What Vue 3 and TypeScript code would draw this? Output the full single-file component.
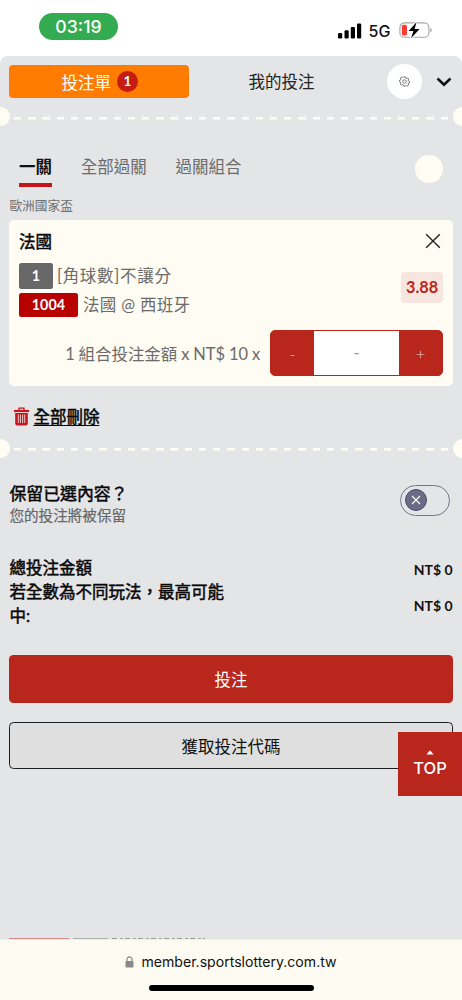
<script setup lang="ts">
import { ref } from 'vue'

const tabs = ['一關', '全部過關', '過關組合']
const activeTab = ref(0)
const keepSelection = ref(false)
</script>

<template>
  <div class="phone">
    <header class="status">
      <span class="clock">03:19</span>
      <div class="status-right">
        <svg class="signal" viewBox="0 0 24 16" width="24" height="16">
          <rect x="0" y="10" width="4.2" height="5.5" rx="1.2" />
          <rect x="6.5" y="7.2" width="4.2" height="8.3" rx="1.2" />
          <rect x="12.8" y="4" width="4.2" height="11.5" rx="1.2" />
          <rect x="19" y="0.6" width="4.2" height="14.9" rx="1.2" />
        </svg>
        <span class="network">5G</span>
        <svg class="battery" viewBox="0 0 34 18" width="34" height="18">
          <rect x="0.9" y="1.9" width="29" height="14.4" rx="4.6" fill="#fff" stroke="#a5a5a5" stroke-width="1.1" />
          <path d="M31.3 6.7v4.8c1.9-.8 1.9-4 0-4.8z" fill="#a5a5a5" />
          <rect x="2.8" y="3.8" width="5.2" height="10.8" rx="1.8" fill="#ff3b30" />
          <path d="M17.6 1 9.6 10h4.9l-2.5 7.3L20.6 8h-5z" fill="#000" stroke="#fff" stroke-width="2" paint-order="stroke" />
        </svg>
      </div>
    </header>

    <main class="sheet">
      <div class="top-row">
        <button class="slip-tab">投注單<span class="count">1</span></button>
        <button class="mine-tab">我的投注</button>
        <button class="gear" aria-label="settings">
          <svg viewBox="0 0 24 24" width="11" height="11" fill="none" stroke="#444" stroke-width="1.5" stroke-linejoin="round">
            <path d="M10 2h4l.7 2.7 1.6.7 2.5-1.4 2.4 2.6-1.3 2.4.6 1.6 2.5.9v3.4l-2.6.7-.7 1.7 1.3 2.4-2.6 2.4-2.3-1.3-1.7.6L14 22h-4l-.8-2.7-1.7-.6-2.4 1.3-2.3-2.5 1.3-2.3-.7-1.7-2.4-.8v-3.3l2.6-.8.6-1.6-1.3-2.3 2.4-2.6 2.4 1.3 1.6-.7z" />
            <circle cx="12" cy="12" r="3.8" />
          </svg>
        </button>
        <svg class="chevron" viewBox="0 0 16 10" width="16" height="10" fill="none" stroke="#111" stroke-width="2.5">
          <path d="M1.5 1.5 8 7.7l6.5-6.2" />
        </svg>
      </div>

      <div class="divider"></div>

      <nav class="tabs">
        <button v-for="(t, i) in tabs" :key="t" :class="['tab', { active: i === activeTab }]" @click="activeTab = i">{{ t }}</button>
        <span class="dot"></span>
      </nav>

      <p class="league">歐洲國家盃</p>

      <section class="card">
        <div class="card-head">
          <h3 class="medium">法國</h3>
          <svg class="close" viewBox="0 0 16 16" width="16" height="16" stroke="#222" stroke-width="1.4">
            <path d="M1.2 1.2 14.8 14.8M14.8 1.2 1.2 14.8" />
          </svg>
        </div>
        <div class="card-body">
          <div class="picks">
            <div class="pick first"><span class="tag gray">1</span>[角球數]不讓分</div>
            <div class="pick"><span class="tag red">1004</span>法國 @ 西班牙</div>
          </div>
          <span class="odds">3.88</span>
        </div>
        <div class="stake">
          <span class="formula">1 組合投注金額 x NT$ 10 x</span>
          <div class="stepper">
            <button>-</button>
            <span class="amount">-</span>
            <button>+</button>
          </div>
        </div>
      </section>

      <div class="delete">
        <svg viewBox="0 0 15 19" width="15" height="19" fill="none" stroke="#c4161c">
          <path d="M5 3V1.2h5V3" stroke-width="1.3" />
          <path d="M0 4h15" stroke-width="2.2" />
          <path d="M1.2 6h12.6v10.5q0 2-2 2h-8.6q-2 0-2-2z" fill="#c4161c" stroke="none" />
          <path d="M4.3 7.5v8.5M6.4 7.5v8.5M8.6 7.5v8.5M10.7 7.5v8.5" stroke="#f3dcdc" stroke-width="0.9" />
        </svg>
        <a class="medium">全部刪除</a>
      </div>

      <div class="divider"></div>

      <div class="keep">
        <div>
          <p class="keep-title medium">保留已選內容？</p>
          <p class="keep-sub">您的投注將被保留</p>
        </div>
        <button class="toggle" aria-label="keep" @click="keepSelection = !keepSelection">
          <span class="knob">
            <svg viewBox="0 0 10 10" width="10" height="10" stroke="#fff" stroke-width="1.1"><path d="M1 1l8 8M9 1l-8 8" /></svg>
          </span>
        </button>
      </div>

      <div class="totals">
        <div class="total-row"><span class="medium">總投注金額</span><b>NT$ 0</b></div>
        <div class="total-row"><span class="wrap medium">若全數為不同玩法，最高可能中:</span><b>NT$ 0</b></div>
      </div>

      <button class="submit">投注</button>
      <button class="code">獲取投注代碼</button>

      <button class="to-top">
        <svg viewBox="0 0 8 5" width="8" height="5"><path d="M.5 4.5 3.3 1q.7-.8 1.4 0l2.8 3.5z" fill="#fff" /></svg>
        <span>TOP</span>
      </button>

      <div class="peek">
        <span class="peek-red"></span>
        <span class="peek-gray"></span>
        <span class="peek-text"></span>
      </div>
    </main>

    <footer class="browser">
      <div class="address">
        <svg viewBox="0 0 9 12" width="9" height="12">
          <path d="M2 6V3.6a2.5 2.8 0 0 1 5 0V6" fill="none" stroke="#8a8a88" stroke-width="1.2" />
          <rect x="0.5" y="5" width="8" height="6.6" rx="1.2" fill="#8a8a88" />
        </svg>
        <span>member.sportslottery.com.tw</span>
      </div>
      <div class="home"></div>
    </footer>
  </div>
</template>

<style>
body {
  background: #fff;
}
</style>

<style scoped>
.phone {
  width: 462px;
  height: 1000px;
  display: flex;
  flex-direction: column;
  overflow: hidden;
  background: #fff;
  font-family: Lato, 'Noto Sans CJK TC', sans-serif;
  font-size: 16.5px;
  color: #111;
}
.phone * {
  box-sizing: border-box;
}
button {
  border: 0;
  padding: 0;
  margin: 0;
  background: none;
  font: inherit;
  color: inherit;
}
p,
h3 {
  margin: 0;
}
svg {
  display: block;
  flex: none;
}
.medium {
  font-weight: 400;
  color: #080808;
  -webkit-text-stroke: 0.5px #080808;
}
.status {
  height: 56px;
  flex: none;
  display: flex;
  justify-content: space-between;
  padding: 13px 31px 0 39px;
  font-family: Inter, sans-serif;
}
.clock {
  width: 79px;
  height: 27px;
  border-radius: 14px;
  background: #33ab50;
  color: #fff;
  font-size: 17.7px;
  font-weight: 500;
  line-height: 27px;
  text-align: center;
}
.status-right {
  display: flex;
  align-items: flex-start;
}
.signal {
  margin-top: 9.5px;
}
.network {
  margin: 8px 7px 0 6.5px;
  width: 23px;
  font-size: 16px;
  font-weight: 500;
  line-height: 20px;
}
.battery {
  margin-top: 8px;
  margin-right: -1.5px;
}
.sheet {
  flex: 1;
  min-height: 0;
  position: relative;
  display: flex;
  flex-direction: column;
  background: #e4e5e7;
  border-radius: 8px 8px 0 0;
  padding: 7px 9.4px 0;
  overflow: hidden;
}
.top-row {
  height: 37px;
  flex: none;
  display: flex;
  align-items: center;
}
.slip-tab {
  width: 179.5px;
  height: 33.5px;
  display: flex;
  align-items: center;
  justify-content: center;
  gap: 6px;
  padding-left: 1px;
  border-radius: 4px;
  background: #ff7c00;
  color: #fff;
}
.count {
  width: 21px;
  height: 21px;
  border-radius: 50%;
  background: #c61c12;
  font-size: 13.5px;
  font-weight: 700;
  line-height: 21px;
}
.mine-tab {
  width: 185px;
  line-height: 22px;
  color: #222;
}
.gear {
  width: 35.5px;
  height: 35.5px;
  margin-left: 13px;
  border-radius: 50%;
  background: #fff;
  display: grid;
  place-items: center;
}
.chevron {
  margin-left: 13.5px;
}
.divider {
  position: relative;
  flex: none;
  height: 19px;
  margin: 7px -9.4px 0;
  background: repeating-linear-gradient(90deg, #fffdf3 0 7.3px, transparent 7.3px 14.22px) 14px 9.7px / 434px 2.6px no-repeat;
}
.divider::before,
.divider::after {
  content: '';
  position: absolute;
  top: 0;
  width: 19px;
  height: 19px;
  border-radius: 50%;
  background: #fffdf3;
}
.divider::before {
  left: -9.5px;
}
.divider::after {
  right: -9.5px;
}
.tabs {
  flex: none;
  height: 42px;
  margin-top: 20px;
  padding: 0 9.5px;
  display: flex;
  align-items: flex-start;
  gap: 28.8px;
}
.tab {
  height: 41px;
  line-height: 42px;
  color: #6a6b6c;
}
.tab.active {
  color: #111;
  font-weight: 700;
  border-bottom: 4px solid #c5151b;
}
.dot {
  width: 28px;
  height: 28px;
  margin: 8.5px 0 0 auto;
  border-radius: 50%;
  background: #fffdf3;
}
.league {
  flex: none;
  height: 32px;
  font-size: 12.7px;
  line-height: 35px;
  color: #6e6f70;
}
.card {
  flex: none;
  height: 165.5px;
  border-radius: 5px;
  background: #fffdf3;
  padding: 9px 9.5px;
}
.card-head {
  height: 24px;
  display: flex;
  align-items: center;
  justify-content: space-between;
}
.card h3 {
  padding-top: 2px;
  font-size: 16.5px;
  line-height: 24px;
}
.close {
  margin-right: 2.5px;
}
.card-body {
  display: flex;
  justify-content: space-between;
  margin-top: 9.5px;
}
.pick {
  display: flex;
  align-items: center;
  gap: 5px;
  height: 26px;
  line-height: 26px;
  color: #6b6b69;
  letter-spacing: 0.35px;
}
.pick.first {
  gap: 4px;
  letter-spacing: 0.7px;
}
.pick + .pick {
  margin-top: 3px;
}
.tag {
  border-radius: 2.5px;
  color: #fff;
  font-size: 14.3px;
  font-weight: 700;
  text-align: center;
  letter-spacing: 0;
}
.gray {
  width: 34px;
  height: 26px;
  line-height: 26px;
  background: #686868;
}
.red {
  width: 59px;
  height: 24px;
  line-height: 24px;
  background: #b80000;
}
.odds {
  width: 42px;
  height: 31px;
  margin-top: 9px;
  border-radius: 4px;
  background: #f7e6df;
  color: #b8261c;
  font-size: 16.3px;
  font-weight: 700;
  line-height: 30px;
  text-align: center;
}
.stake {
  display: flex;
  align-items: center;
  justify-content: flex-end;
  gap: 10px;
  margin-top: 12.5px;
  color: #6b6b69;
}
.formula {
  padding-bottom: 1px;
  font-size: 16.45px;
  word-spacing: -0.3px;
}
.stepper {
  width: 173px;
  height: 46px;
  display: grid;
  grid-template-columns: 43px 1fr 43px;
  border: 1px solid #b8261c;
  border-radius: 5px;
  background: #b8261c;
  overflow: hidden;
  color: #f2d4d0;
}
.stepper button {
  font-weight: 300;
}
.amount {
  background: #fff;
  color: #999;
  line-height: 45px;
  text-align: center;
}
.delete {
  flex: none;
  height: 47px;
  display: flex;
  align-items: center;
  gap: 4.5px;
  padding: 15px 0 0 4.5px;
}
.delete a {
  margin-top: -2px;
  text-decoration: underline;
  text-decoration-thickness: 1px;
  text-underline-offset: 2px;
}
.delete + .divider {
  margin-top: 6px;
}
.keep {
  flex: none;
  display: flex;
  justify-content: space-between;
  margin-top: 23.5px;
}
.keep-title {
  padding-top: 1px;
  font-size: 16.9px;
  line-height: 23px;
}
.keep-sub {
  font-size: 14.6px;
  line-height: 22px;
  color: #666768;
  -webkit-text-stroke: 0.2px #666768;
}
.toggle {
  width: 50px;
  height: 31px;
  margin: 3.5px 2.5px 0 0;
  padding-left: 4px;
  border: 1.2px solid #77738f;
  border-radius: 16px;
}
.knob {
  width: 22px;
  height: 22px;
  display: grid;
  place-items: center;
  border: 1px solid #4e4a70;
  border-radius: 50%;
  background: #6c6a85;
}
.totals {
  flex: none;
  margin-top: 29px;
}
.total-row {
  display: flex;
  align-items: center;
  justify-content: space-between;
  line-height: 24px;
}
.total-row b {
  margin-top: 2px;
  font-size: 14px;
  line-height: 21px;
}
.wrap {
  width: 222px;
}
.submit,
.code {
  flex: none;
  height: 47.5px;
  border-radius: 4.5px;
}
.submit {
  margin-top: 27.3px;
  background: #b8261c;
  color: #fff;
}
.code {
  margin-top: 19px;
  border: 1.2px solid #1c1f22;
  background: #dfdfdf;
}
.to-top {
  position: absolute;
  right: 0;
  top: 676px;
  width: 64px;
  height: 64px;
  display: flex;
  flex-direction: column;
  align-items: center;
  padding-top: 18px;
  background: #b8261c;
  color: #fff;
  font-family: Inter, sans-serif;
  font-size: 16.5px;
  font-weight: 500;
  line-height: 26px;
}
.peek {
  display: flex;
  gap: 4px;
  height: 1.5px;
  margin-top: auto;
}
.peek-red {
  width: 60px;
  background: #d98783;
}
.peek-gray {
  width: 35px;
  background: #b0b0b0;
}
.peek-text {
  width: 93px;
  background: repeating-linear-gradient(90deg, #9a9b9c 0 5px, transparent 5px 8px, #a5a6a7 8px 11px, transparent 11px 13px);
}
.browser {
  flex: none;
  height: 61px;
  background: #fdfbf2;
  border-top: 1px solid #eeeeea;
  font-family: Inter, sans-serif;
  font-size: 14.1px;
}
.address {
  display: flex;
  align-items: center;
  justify-content: center;
  gap: 7px;
  height: 43px;
}
.home {
  width: 165px;
  height: 6px;
  margin: 2px auto 0;
  border-radius: 3px;
  background: #000;
}
</style>
